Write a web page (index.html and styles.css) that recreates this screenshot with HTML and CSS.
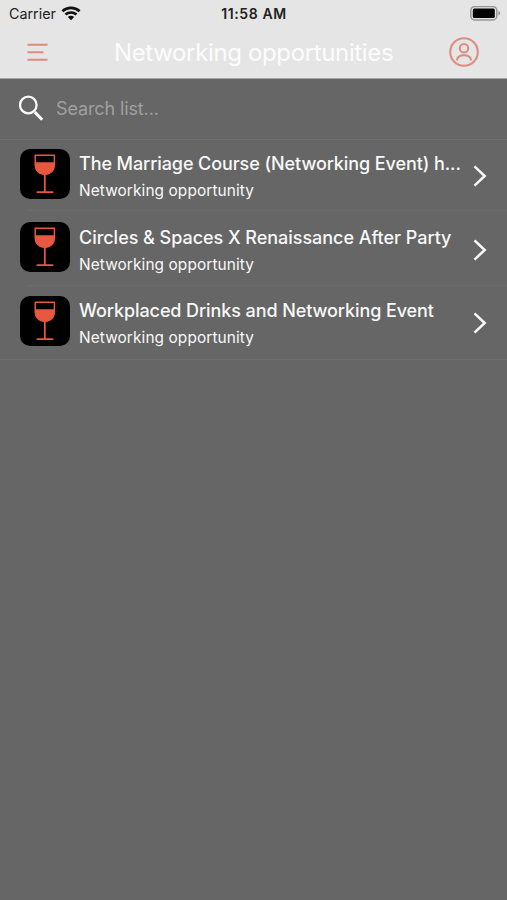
FILE: index.html
```html
<!DOCTYPE html>
<html lang="en">
<head>
<meta charset="utf-8">
<title>Networking opportunities</title>
<link rel="stylesheet" href="styles.css">
</head>
<body>
<svg class="defs" width="0" height="0" aria-hidden="true">
  <symbol id="glass" viewBox="0 0 50 50">
    <path d="M15.2 6.2H34.4V15C34.4 21.5 30.5 25.3 24.8 25.3S15.2 21.5 15.2 15Z" fill="none" stroke="#e8573f" stroke-width="1.5" stroke-linejoin="round"/>
    <path d="M15 13.2H34.6V15C34.6 21.5 30.5 25.5 24.8 25.5S15 21.5 15 15Z" fill="#e8573f"/>
    <path d="M24.8 25V43M17.3 43.2H32.6" fill="none" stroke="#e8573f" stroke-width="1.8" stroke-linecap="round"/>
  </symbol>
  <symbol id="chevron" viewBox="0 0 14 24">
    <path d="M1.5 2.4L11.7 12L1.5 21.6" fill="none" stroke="#f8f8f8" stroke-width="2.5"/>
  </symbol>
</svg>
<header class="header">
  <div class="status">
    <div class="carrier"><span>Carrier</span>
      <svg width="20" height="15" viewBox="0 0 20 15"><g fill="none" stroke="#111" stroke-width="2.7"><path d="M1.4 5.3C6.2.8 13.8.8 18.6 5.3"/><path d="M4.5 8.6C7.6 5.8 12.4 5.8 15.5 8.6"/></g><path d="M6.8 11C8.6 9.4 11.4 9.4 13.2 11L10 14.3Z" fill="#111"/></svg>
    </div>
    <span class="time">11:58 AM</span>
    <svg class="battery" width="31" height="16" viewBox="0 0 31 16"><rect x=".8" y=".5" width="26" height="13.4" rx="4" fill="none" stroke="#969696" stroke-width="1.5"/><rect x="2.8" y="2.5" width="22" height="9.5" rx="1.5" fill="#050505"/><path d="M28.4 5C30.8 5.7 30.8 8.7 28.4 9.5Z" fill="#969696"/></svg>
  </div>
  <nav class="nav">
    <svg width="22" height="20" viewBox="0 0 22 20"><path d="M.5 1.7H20.5M.5 9.2H16.5M.5 16.7H20.5" stroke="#dd8b80" stroke-width="2"/></svg>
    <h1 class="title">Networking opportunities</h1>
    <svg class="profile" width="30" height="30" viewBox="0 0 30 30"><g fill="none" stroke="#dd8b80" stroke-width="2"><circle cx="15" cy="15" r="13.8"/><circle cx="15" cy="11.2" r="4.2"/><path d="M7.8 23.4C9 16.6 21 16.6 22.2 23.4"/></g></svg>
  </nav>
</header>
<div class="search">
  <svg width="26" height="27" viewBox="0 0 26 27"><circle cx="9.3" cy="10" r="8.3" fill="none" stroke="#f8f8f8" stroke-width="2.3"/><path d="M15.8 17.1L23.2 24.8" stroke="#f8f8f8" stroke-width="3"/></svg>
  <span class="placeholder">Search list...</span>
</div>
<main class="list">
  <div class="row"><div class="tile"><svg width="50" height="50"><use href="#glass"/></svg></div><div class="copy"><div class="name">The Marriage Course (Networking Event) h...</div><div class="kind">Networking opportunity</div></div><svg width="14" height="24"><use href="#chevron"/></svg></div>
  <div class="row"><div class="tile"><svg width="50" height="50"><use href="#glass"/></svg></div><div class="copy"><div class="name wide">Circles &amp; Spaces X Renaissance After Party</div><div class="kind">Networking opportunity</div></div><svg width="14" height="24"><use href="#chevron"/></svg></div>
  <div class="row"><div class="tile"><svg width="50" height="50"><use href="#glass"/></svg></div><div class="copy"><div class="name">Workplaced Drinks and Networking Event</div><div class="kind">Networking opportunity</div></div><svg width="14" height="24"><use href="#chevron"/></svg></div>
</main>
</body>
</html>
```

FILE: styles.css
```css
* { box-sizing: border-box; }
body { margin: 0; width: 507px; min-height: 900px; background: #666; color: #f8f8f8; font-family: Inter, "Liberation Sans", sans-serif; white-space: nowrap; overflow: hidden; }
svg { display: block; flex: none; }
.defs { position: absolute; }
.header { height: 79px; background: #e5e5e5; border-bottom: 1px solid #a8a8a8; }
.status { height: 27px; display: grid; grid-template-columns: 1fr auto 1fr; align-items: center; padding: 0 6px 0 7px; color: #222; }
.carrier { display: flex; align-items: center; gap: 5px; font-size: 14.3px; padding-left: 2px; }
.time { font-size: 14px; font-weight: 600; letter-spacing: 0.6px; }
.battery { justify-self: end; }
.nav { height: 51px; display: flex; align-items: center; padding: 0 27px; }
.title { margin: 0 0 0 65px; font-size: 24px; font-weight: 400; letter-spacing: -0.36px; color: #fcfcfc; }
.profile { margin: -1px 1px 0 auto; }
.search { height: 60.6px; display: flex; align-items: center; gap: 11px; padding: 0 19px; border-bottom: 1px solid #6f6f6f; }
.placeholder { font-size: 18px; letter-spacing: -0.12px; color: #a0a0a0; }
.row { height: 73.4px; display: flex; align-items: center; padding: 0 20px; position: relative; }
.row::after { content: ""; position: absolute; left: 27px; right: 0; bottom: 0; height: 1px; background: #6c6c6c; }
.row:first-child::after { bottom: 2px; }
.row:last-child::after { left: 0; }
.tile { width: 50px; height: 50px; border-radius: 10px; background: #000; overflow: hidden; margin-top: -5px; }
.copy { flex: 1; padding-left: 9px; margin-top: 2px; }
.name { font-size: 18px; font-weight: 500; line-height: 27px; letter-spacing: -0.09px; }
.wide { letter-spacing: -0.03px; }
.kind { font-size: 15.4px; line-height: 27px; letter-spacing: 0.1px; }
```
